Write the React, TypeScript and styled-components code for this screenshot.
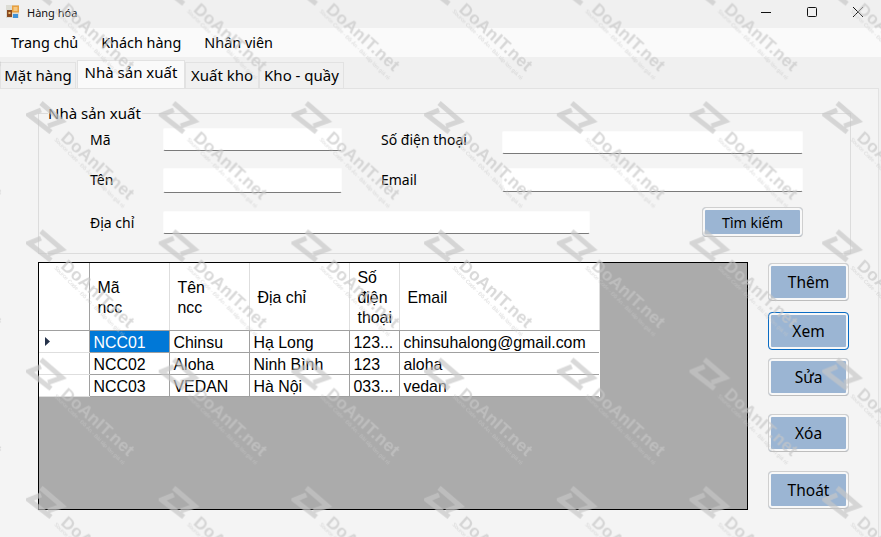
import React from "react";
import styled, { createGlobalStyle } from "styled-components";

const Global = createGlobalStyle`
  html, body { margin: 0; padding: 0; background: #f4f4f4; }
  * { box-sizing: border-box; }
`;

const Window = styled.div`
  position: relative;
  width: 881px;
  height: 537px;
  overflow: hidden;
  background: #f0f0f0;
  font-family: "Noto Sans", "Open Sans", sans-serif;
  color: #000;
`;

const TitleBar = styled.div`
  display: flex;
  align-items: flex-start;
  height: 28px;
  padding: 5px 0 0 6px;
`;

const TitleText = styled.span`
  margin-left: 8px;
  font-size: 11px;
  line-height: 15px;
  color: #111;
`;

const WindowControls = styled.div`
  margin: -5px 0 0 auto;
  display: flex;
`;

const WindowControl = styled.div`
  width: 46px;
  height: 24px;
  display: flex;
  align-items: center;
  justify-content: center;
`;

const MenuBar = styled.div`
  display: flex;
  align-items: center;
  gap: 23px;
  height: 29px;
  padding-left: 11px;
  background: #fafafa;
  font-size: 14.4px;
`;

const TabStrip = styled.div`
  display: flex;
  align-items: flex-end;
  height: 31px;
  padding-top: 3px;
`;

const Tab = styled.div<{ $active?: boolean; $width: number }>`
  width: ${(p) => p.$width}px;
  height: ${(p) => (p.$active ? 28 : 26)}px;
  margin-left: ${(p) => (p.$active ? 1 : 0)}px;
  padding-top: ${(p) => (p.$active ? 1 : 2)}px;
  background: ${(p) => (p.$active ? "#fafafa" : "#f0f0f0")};
  border: 1px solid #e2e2e2;
  border-bottom: none;
  text-align: center;
  font-size: 15px;
  line-height: 20px;
  white-space: nowrap;
`;

const Page = styled.div`
  width: 879px;
  height: 449px;
  padding: 24px 0 0 38px;
  background: #f4f4f4;
  border-top: 1px solid #e2e2e2;
  border-right: 1px solid #e2e2e2;
`;

const Group = styled.div`
  position: relative;
  width: 813px;
  height: 141px;
  padding: 14px 0 0 51px;
  border: 1px solid #dcdcdc;
  display: grid;
  grid-template-columns: 73px 179px 39px 121px 301px;
  grid-template-rows: 40px 43px 30px;
  align-items: start;
`;

const Legend = styled.span`
  position: absolute;
  left: 9px;
  top: -10px;
  padding-right: 1px;
  background: #f4f4f4;
  font-size: 15px;
  line-height: 18px;
`;

const FieldLabel = styled.label`
  font-size: 14px;
  line-height: 24px;
`;

const Input = styled.div<{ $offset?: number; $height?: number }>`
  height: ${(p) => p.$height ?? 23}px;
  margin-top: ${(p) => p.$offset ?? 0}px;
  background: #fff;
  border: 1px solid #fcfcfc;
  border-bottom: 1px solid #7a7a7a;
  border-radius: 2px;
`;

const SearchRow = styled.div`
  grid-column: 1 / -1;
  display: flex;
  align-items: flex-start;
`;

const AddressLabel = styled(FieldLabel)`
  width: 73px;
`;

const AddressInput = styled(Input)`
  width: 428px;
`;

const Button = styled.button<{ $focused?: boolean }>`
  display: block;
  padding: 0;
  border: 1px solid ${(p) => (p.$focused ? "#0a6cc4" : "#cfcfcf")};
  border-bottom-color: ${(p) => (p.$focused ? "#0a6cc4" : "#bdbdbd")};
  border-radius: 4px;
  background: #9bb5d3;
  box-shadow: inset 0 0 0 2px #f8f8f8;
  font-family: "Noto Sans", "Open Sans", sans-serif;
  font-size: 15px;
  color: #000;
`;

const SearchButton = styled(Button)`
  width: 101px;
  height: 30px;
  margin: -4px 0 0 112px;
  font-size: 14.2px;
`;

const Content = styled.div`
  display: flex;
  gap: 20px;
  margin-top: 8px;
`;

const GridView = styled.div`
  width: 710px;
  height: 248px;
  background: #ababab;
  border: 1px solid #000;
`;

const Table = styled.table`
  border-collapse: collapse;
  table-layout: fixed;
  width: 560px;
  background: #fff;
  font-family: "Liberation Sans", Arial, sans-serif;
  font-size: 15.9px;
`;

const HeadCell = styled.th`
  height: 67px;
  padding: 3px 0 0 8px;
  font-weight: 400;
  text-align: left;
  line-height: 20px;
  border-right: 1px solid #dedede;
  border-bottom: 1px solid #a0a0a0;
  vertical-align: middle;
`;

const Corner = styled(HeadCell)`
  border-right-color: #a0a0a0;
`;

const RowHead = styled.td`
  height: 22px;
  padding: 0;
  border-right: 1px solid #a0a0a0;
  border-bottom: 1px solid #dedede;
`;

const Cell = styled.td<{ $selected?: boolean }>`
  height: 22px;
  padding: 2px 0 0 4px;
  line-height: 19px;
  overflow: hidden;
  white-space: nowrap;
  background: ${(p) => (p.$selected ? "#0078d7" : "#fff")};
  color: ${(p) => (p.$selected ? "#fff" : "#000")};
  border-right: 1px solid #a0a0a0;
  border-bottom: 1px solid #a0a0a0;
  &:last-child { border-right: none; }
`;

const RowArrow = styled.svg`
  display: block;
  margin-left: 6px;
`;

const SideButtons = styled.div`
  display: flex;
  flex-direction: column;
`;

const SideButton = styled(Button)<{ $top: number }>`
  width: 81px;
  height: 38px;
  margin-top: ${(p) => p.$top}px;
  font-size: 15.5px;
`;

const Watermark = styled.svg`
  position: absolute;
  inset: 0;
  pointer-events: none;
`;

const rows = [
  ["NCC01", "Chinsu", "Hạ Long", "123...", "chinsuhalong@gmail.com"],
  ["NCC02", "Aloha", "Ninh Bình", "123", "aloha"],
  ["NCC03", "VEDAN", "Hà Nội", "033...", "vedan"],
];

const sideButtons = [
  { label: "Thêm", top: 1 },
  { label: "Xem", top: 11, focused: true },
  { label: "Sửa", top: 8 },
  { label: "Xóa", top: 18 },
  { label: "Thoát", top: 19 },
];

const fill = "rgb(198,198,198)";

const WatermarkLayer = () => (
  <Watermark width={881} height={537}>
    <defs>
      <pattern id="wm" x={26} y={100} width={132.7} height={128.3} patternUnits="userSpaceOnUse">
        <g transform="translate(20 18)">
          <path
            d="M-5-15 L16 3 L2 8 M5 14 L-17-3 L-5-8"
            fill="none"
            stroke={fill}
            strokeOpacity={0.67}
            strokeWidth={5}
          />
          <text transform="translate(14 21) rotate(42)" fontFamily="'Liberation Sans', sans-serif" fontWeight={700} fontSize={17} letterSpacing={0.3} fill={fill} fillOpacity={0.67}>
            DoAnIT.net
          </text>
          <text transform="translate(8 22) rotate(45)" fontFamily="'Liberation Sans', sans-serif" fontSize={5.4} fill={fill} fillOpacity={0.67}>
            Source Code - Đồ Án - Bài tập lớn giá rẻ
          </text>
        </g>
      </pattern>
    </defs>
    <rect width={881} height={537} fill="url(#wm)" />
  </Watermark>
);

export default function App() {
  return (
    <Window>
      <Global />
      <TitleBar>
        <svg width="13" height="13" viewBox="0 0 13 13">
          <rect x="0" y="0" width="13" height="13" fill="#dcdcd4" />
          <rect x="1" y="5" width="5" height="7" fill="#8a4a20" />
          <rect x="2.5" y="7" width="2" height="2" fill="#f0c070" />
          <rect x="6" y="0.5" width="7" height="7" fill="#e8a040" />
          <rect x="7.5" y="2" width="4" height="4" fill="#f6c880" />
          <rect x="7" y="9" width="5" height="4" fill="#3f92d8" />
        </svg>
        <TitleText>Hàng hóa</TitleText>
        <WindowControls>
          <WindowControl>
            <svg width="10" height="10" viewBox="0 0 10 10"><path d="M0 5.5H10" stroke="#111" strokeWidth="1" /></svg>
          </WindowControl>
          <WindowControl>
            <svg width="10" height="10" viewBox="0 0 10 10"><rect x="0.5" y="0.5" width="9" height="9" rx="1" fill="none" stroke="#111" /></svg>
          </WindowControl>
          <WindowControl>
            <svg width="10" height="10" viewBox="0 0 10 10"><path d="M0 0L10 10M10 0L0 10" stroke="#111" strokeWidth="1" /></svg>
          </WindowControl>
        </WindowControls>
      </TitleBar>
      <MenuBar>
        <span>Trang chủ</span>
        <span>Khách hàng</span>
        <span>Nhân viên</span>
      </MenuBar>
      <TabStrip>
        <Tab $width={76}>Mặt hàng</Tab>
        <Tab $width={108} $active>Nhà sản xuất</Tab>
        <Tab $width={74}>Xuất kho</Tab>
        <Tab $width={85}>Kho - quầy</Tab>
      </TabStrip>
      <Page>
        <Group>
          <Legend>Nhà sản xuất</Legend>
          <FieldLabel>Mã</FieldLabel>
          <Input />
          <span />
          <FieldLabel>Số điện thoại</FieldLabel>
          <Input $offset={3} />
          <FieldLabel>Tên</FieldLabel>
          <Input $height={25} />
          <span />
          <FieldLabel>Email</FieldLabel>
          <Input $height={24} />
          <SearchRow>
            <AddressLabel>Địa chỉ</AddressLabel>
            <AddressInput />
            <SearchButton>Tìm kiếm</SearchButton>
          </SearchRow>
        </Group>
        <Content>
          <GridView>
            <Table>
              <colgroup>
                <col width={50} /><col width={80} /><col width={80} /><col width={100} /><col width={50} /><col width={200} />
              </colgroup>
              <thead>
                <tr>
                  <Corner />
                  <HeadCell>Mã<br />ncc</HeadCell>
                  <HeadCell>Tên<br />ncc</HeadCell>
                  <HeadCell>Địa chỉ</HeadCell>
                  <HeadCell>Số<br />điện<br />thoại</HeadCell>
                  <HeadCell>Email</HeadCell>
                </tr>
              </thead>
              <tbody>
                {rows.map((r, i) => (
                  <tr key={r[0]}>
                    <RowHead>
                      {i === 0 && (
                        <RowArrow width="5" height="9" viewBox="0 0 5 9"><path d="M0 0L5 4.5L0 9Z" fill="#25324a" /></RowArrow>
                      )}
                    </RowHead>
                    {r.map((c, j) => (
                      <Cell key={j} $selected={i === 0 && j === 0}>{c}</Cell>
                    ))}
                  </tr>
                ))}
              </tbody>
            </Table>
          </GridView>
          <SideButtons>
            {sideButtons.map((b) => (
              <SideButton key={b.label} $top={b.top} $focused={b.focused}>{b.label}</SideButton>
            ))}
          </SideButtons>
        </Content>
      </Page>
      <WatermarkLayer />
    </Window>
  );
}
